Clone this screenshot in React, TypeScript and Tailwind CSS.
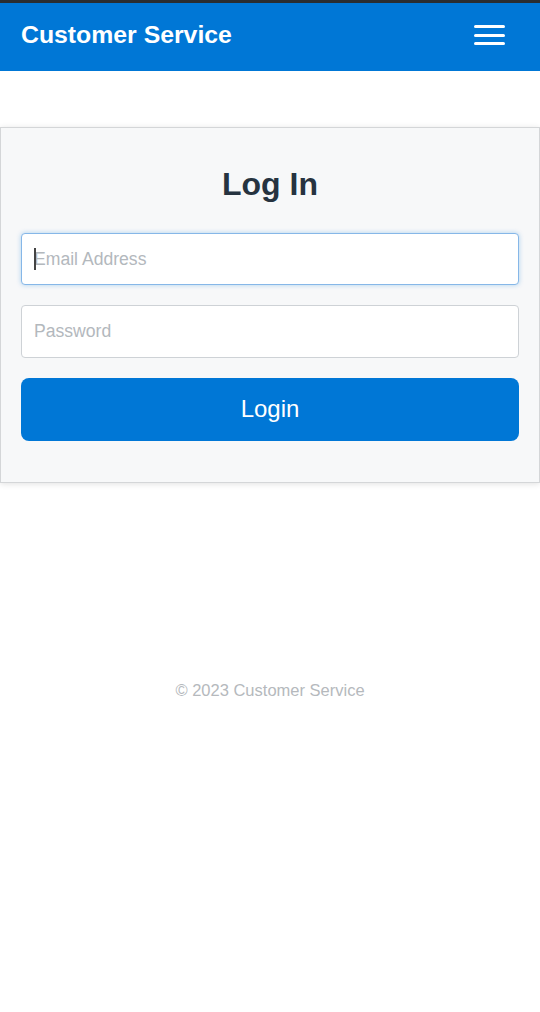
const font = { fontFamily: '"Liberation Sans", Arial, sans-serif' }

export default function App() {
  return (
    <div className="min-h-[1012px] bg-white" style={font}>
      {/* Top bar */}
      <div className="h-[3px] bg-[#2a2d30]" />
      <header className="h-[68px] bg-[#0077d6] flex items-center justify-between pl-[21px] pr-[35px] pb-[4px]">
        <h1 className="text-[24.8px] font-bold text-white leading-none">Customer Service</h1>
        <button className="flex flex-col gap-[5.5px] w-[31px]">
          <span className="h-[3px] w-full bg-white rounded-full" />
          <span className="h-[3px] w-full bg-white rounded-full" />
          <span className="h-[3px] w-full bg-white rounded-full" />
        </button>
      </header>

      {/* Login card */}
      <main className="pt-[56px]">
        <div className="bg-[#f7f8f9] border border-[#d4d6d8] shadow-[0_1px_6px_rgba(0,0,0,0.12)] px-[20px] pt-[37px] pb-[41px]">
          <h2 className="text-[32px] font-bold text-[#263340] text-center leading-[38px]">Log In</h2>
          <form className="mt-[30px] flex flex-col">
            <div className="relative">
              <input
                type="email"
                placeholder="Email Address"
                className="w-full h-[52px] rounded-[4px] border border-[#86b7e8] bg-white px-[12px] text-[17.6px] text-[#333] placeholder:text-[#b3b8bd] outline-none shadow-[0_0_5px_rgba(0,119,214,0.3)]"
              />
              <span className="absolute left-[13px] top-[15px] h-[22px] w-[1.5px] bg-[#444]" />
            </div>
            <input
              type="password"
              placeholder="Password"
              className="mt-[20px] w-full h-[53px] rounded-[4px] border border-[#ced2d6] bg-white px-[12px] text-[17.6px] text-[#333] placeholder:text-[#b3b8bd] outline-none"
            />
            <button
              type="button"
              className="mt-[20px] h-[63px] w-full rounded-[8px] bg-[#0077d6] text-white text-[24px] pb-[2px]"
            >
              Login
            </button>
          </form>
        </div>
      </main>

      {/* Footer */}
      <footer className="mt-[195px] text-center text-[16.5px] text-[#b5b9bd]">
        © 2023 Customer Service
      </footer>
    </div>
  )
}
